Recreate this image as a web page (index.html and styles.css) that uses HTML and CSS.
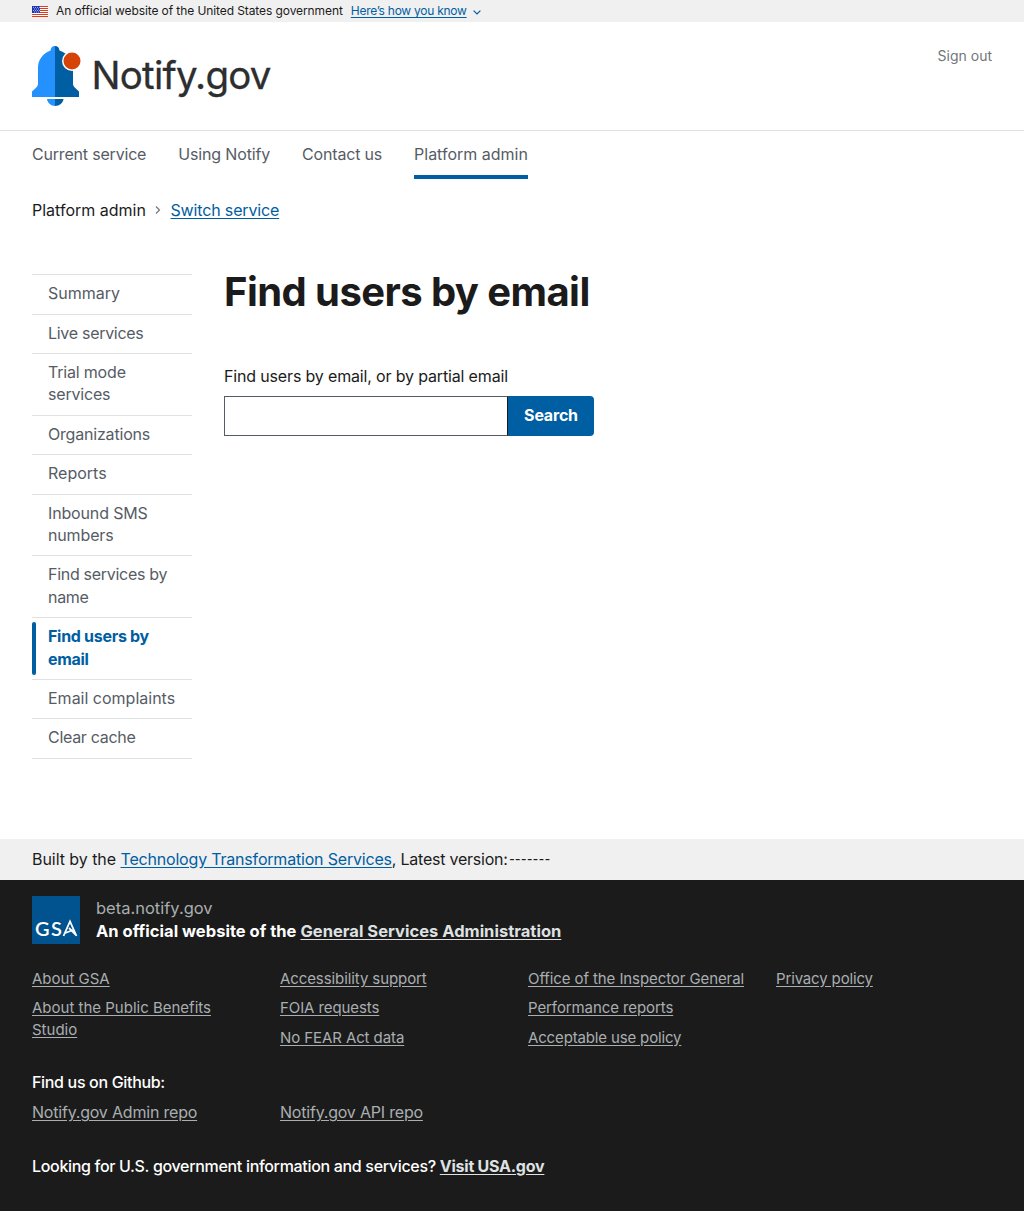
FILE: index.html
```html
<!DOCTYPE html>
<html lang="en">
<head>
<meta charset="utf-8">
<title>Find users by email – Notify.gov</title>
<link rel="stylesheet" href="styles.css">
</head>
<body>
<div class="banner">
  <svg class="flag" width="16" height="11" viewBox="0 0 16 11"><path fill="#fff" d="M0 0h16v11H0z"/><path fill="#db3e1f" d="M0 0h16v1H0zM0 2h16v1H0zM0 4h16v1H0zM0 6h16v1H0zM0 8h16v1H0zM0 10h16v1H0z"/><path fill="#1e33b1" d="M0 0h8v7H0z"/><path stroke="#fff" stroke-width=".8" stroke-dasharray=".8 1.2" d="M1 1.4h7M2 3h5M1 4.6h7M2 6h5"/></svg>
  <span class="banner-text">An official website of the United States government</span>
  <a class="banner-link" href="#">Here’s how you know</a>
  <svg class="caret" width="8" height="5" viewBox="0 0 8 5"><path d="M.6.6 4 4 7.400.6" fill="none" stroke="#005ea2" stroke-width="1.2"/></svg>
</div>
<header class="header">
  <a class="logo" href="#">
    <svg width="240" height="60" viewBox="0 0 240 60">
      <path fill="#2491ff" d="M23 0c-2.800 0-4.200 1.800-4.500 4.500C11 7.500 6 13.500 6 22v15c0 2-.5 3.500-2 4.700L0 45.500V51h23z"/>
      <path fill="#005ea2" d="M23 0c2.800 0 4.200 1.800 4.500 4.500C35.500 7.500 41 13.500 41 22v15c0 2 .5 3.500 2 4.700l4 3.800V51H23z"/>
      <path fill="#2491ff" d="M15 53h8v7c-4 0-7.500-3-8-7z"/>
      <path fill="#005ea2" d="M23 53h8.500c-.5 4-4 7-8.500 7z"/>
      <circle cx="40" cy="15" r="10" fill="#fff"/><circle cx="40" cy="15" r="8.500" fill="#d54309"/>
      <text class="logo-text" x="59.500" y="43" textLength="180">Notify.gov</text>
    </svg>
  </a>
  <a class="signout" href="#">Sign out</a>
</header>
<nav class="nav">
  <a class="tight" href="#">Current service</a><a class="snug" href="#">Using Notify</a><a class="tight" href="#">Contact us</a><a class="current" href="#">Platform admin</a>
</nav>
<div class="crumbs">
  <span>Platform admin</span>
  <svg width="6" height="8" viewBox="0 0 6 8"><path d="M1 .5 4.500 4 1 7.500" fill="none" stroke="#71767a" stroke-width="1.200"/></svg>
  <a class="snug" href="#">Switch service</a>
</div>
<div class="content">
  <ul class="sidenav">
    <li><a href="#">Summary</a></li>
    <li><a class="tighter" href="#">Live services</a></li>
    <li><a class="tight" href="#">Trial mode<br>services</a></li>
    <li><a class="tight" href="#">Organizations</a></li>
    <li><a href="#">Reports</a></li>
    <li><a class="snug" href="#">Inbound SMS<br>numbers</a></li>
    <li><a class="tighter" href="#">Find services by<br>name</a></li>
    <li class="active"><a class="tighter" href="#">Find users by<br>email</a></li>
    <li><a href="#">Email complaints</a></li>
    <li><a class="tighter" href="#">Clear cache</a></li>
  </ul>
  <main>
    <h1>Find users by email</h1>
    <label for="search">Find users by email, or by partial email</label>
    <form class="search"><input id="search" type="text"><button type="button">Search</button></form>
  </main>
</div>
<div class="built"><span><span class="by">Built by the </span><a href="#">Technology Transformation Services</a>, Latest version:<span class="dashes">-------</span></span></div>
<footer class="footer">
  <div class="identity">
    <svg width="48" height="48" viewBox="0 0 48 48"><path fill="#00538f" d="M0 0h48v48H0z"/><text class="gsa" x="3" y="40" textLength="27">GS</text><path d="M31.500 40 38 25.500 44.500 40M32 37.500l9-3.500M37 32l7 7" fill="none" stroke="#fff" stroke-width="1.800"/></svg>
    <div><p class="domain">beta.notify.gov</p><p class="official">An official website of the <a href="#">General Services Administration</a></p></div>
  </div>
  <div class="links">
    <ul><li><a href="#">About GSA</a></li><li><a href="#">About the Public Benefits<br>Studio</a></li></ul>
    <ul class="fit"><li><a href="#">Accessibility support</a></li><li><a href="#">FOIA requests</a></li><li><a href="#">No FEAR Act data</a></li></ul>
    <ul class="fit"><li><a href="#">Office of the Inspector General</a></li><li><a href="#">Performance reports</a></li><li><a class="snug" href="#">Acceptable use policy</a></li></ul>
    <ul><li><a class="snug" href="#">Privacy policy</a></li></ul>
  </div>
  <p class="github">Find us on Github:</p>
  <div class="repos"><a href="#">Notify.gov Admin repo</a><a href="#">Notify.gov API repo</a></div>
  <p class="usa">Looking for U.S. government information and services? <a href="#">Visit USA.gov</a></p>
</footer>
</body>
</html>
```
FILE: styles.css
```css
* { box-sizing: border-box; }
body { margin: 0; background: #fff; color: #1b1b1b; font: 16px/22.4px Inter, "Liberation Sans", sans-serif; }
ul, p, h1 { margin: 0; padding: 0; list-style: none; }
a { color: #005ea2; text-underline-offset: 2px; }
.snug { letter-spacing: -.15px; }
.tight { letter-spacing: -.19px; }
.tighter { letter-spacing: -.29px; }
.banner { display: flex; align-items: center; height: 22px; padding: 0 32px; background: #f0f0f0; font-size: 12px; line-height: 22px; }
.flag { margin-right: 8px; }
.banner-text { letter-spacing: -.09px; }
.banner-link { margin: 0 6px 0 8px; letter-spacing: -.26px; }
.caret { margin-top: 2px; }
.header { display: flex; justify-content: space-between; height: 109px; padding: 24px 32px 0; border-bottom: 1px solid #dfe1e2; }
.logo svg { display: block; }
.logo-text { font-size: 38.500px; fill: #2d2e2f; stroke: #2d2e2f; stroke-width: .3px; }
.signout { font-size: 14px; line-height: 20px; color: #71767a; text-decoration: none; }
.nav { display: flex; gap: 32px; height: 48px; padding: 0 32px; }
.nav a { padding-top: 12px; color: #565c65; text-decoration: none; }
.nav .current { border-bottom: 4px solid #005ea2; }
.crumbs { display: flex; align-items: center; gap: 9.300px; height: 22px; margin-top: 20px; padding: 0 32px; }
.content { display: flex; gap: 32px; height: 618px; padding: 53px 32px 0; }
.sidenav { width: 160px; padding-top: .150px; }
.sidenav li { position: relative; padding: 7.100px 0 8.900px 16px; border-top: 1px solid #dfe1e2; }
.sidenav li:last-child { border-bottom: 1px solid #dfe1e2; }
.sidenav a { color: #565c65; text-decoration: none; }
.sidenav .active a { color: #005ea2; font-weight: 700; }
.sidenav .active::before { content: ""; position: absolute; inset: 4px auto 4px 0; width: 4px; border-radius: 4px; background: #005ea2; }
h1 { margin-top: -2px; font-size: 40px; line-height: 40px; font-weight: 700; letter-spacing: -.570px; }
label { display: block; margin-top: 53px; letter-spacing: -.160px; }
.search { display: flex; width: 370px; height: 40px; margin-top: 8.600px; }
.search input { width: 284px; border: 1px solid #565c65; border-right-color: #1b1b1b; padding: 8px; }
.search button { flex: 1; padding: 0 0 2px; border: 0; border-radius: 0 4px 4px 0; background: #005ea2; color: #fff; font: 700 16px Inter, sans-serif; letter-spacing: -.2px; }
.built { height: 41px; padding: 9px 32px; background: #f0f0f0; letter-spacing: -.230px; }
.by { letter-spacing: -.050px; }
.built a { letter-spacing: -.190px; }
.dashes { margin-left: 2px; font-family: Roboto, sans-serif; letter-spacing: 1.500px; }
.footer { height: 331px; padding: 16px 32px; background: #1b1b1b; color: #fff; }
.footer a { color: #a9aeb1; }
.identity { display: flex; gap: 16px; height: 48px; font-size: 16.500px; }
.identity svg { display: block; }
.gsa { font: 600 20px Lato, sans-serif; fill: #fff; }
.domain { color: #a9aeb1; padding-top: 1px; }
.official { padding-top: .600px; font-weight: 700; letter-spacing: .020px; }
.footer .official a, .footer .usa a { color: #dfe1e2; font-weight: 700; }
.links { display: grid; grid-template-columns: repeat(4, 216px); column-gap: 32px; height: 104px; padding-top: 24px; font-size: 15px; line-height: 22px; white-space: nowrap; }
.links li { margin-bottom: 7.300px; }
.fit { letter-spacing: -.090px; }
.github { margin-top: 23px; font-weight: 500; letter-spacing: -.330px; }
.repos { display: grid; grid-template-columns: 216px 216px; gap: 32px; margin-top: 8px; letter-spacing: -.200px; }
.usa { margin-top: 31px; font-weight: 500; letter-spacing: -.320px; }
.usa a { letter-spacing: -.240px; }
```
